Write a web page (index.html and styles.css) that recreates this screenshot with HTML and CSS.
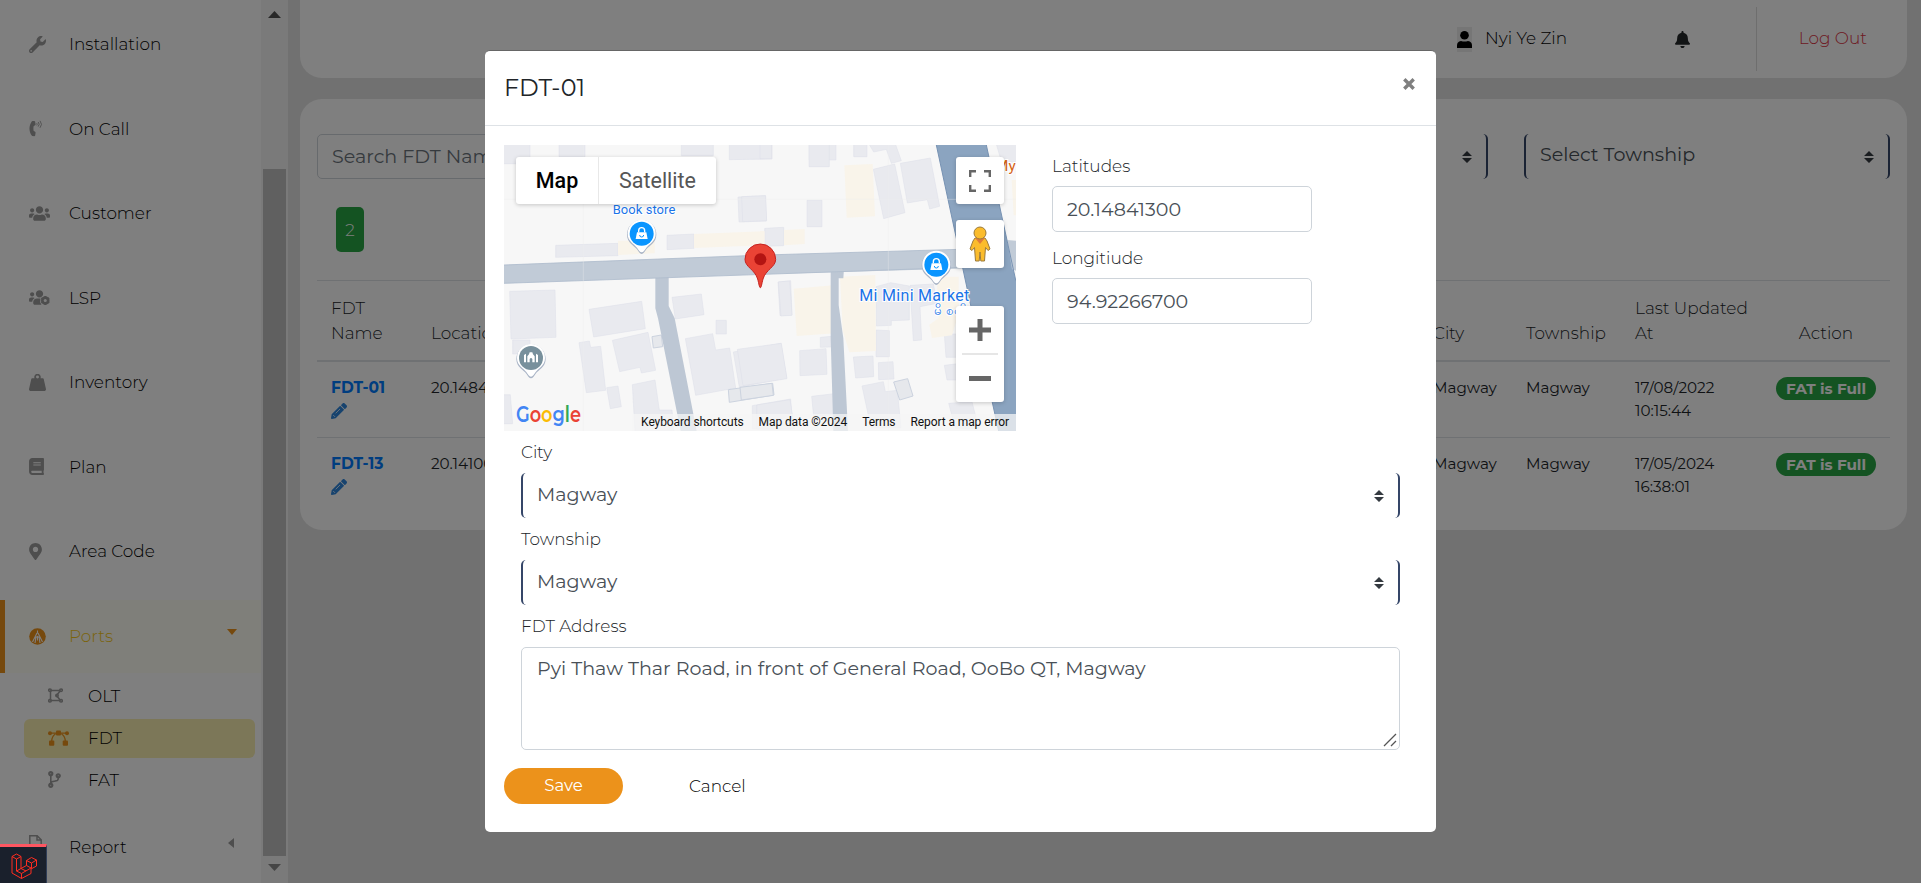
FILE: index.html
```html
<!DOCTYPE html>
<html lang="en">
<head>
<meta charset="utf-8">
<title>FDT</title>
<link rel="stylesheet" href="styles.css">
</head>
<body>
<svg class="defs" aria-hidden="true">
  <defs>
    <symbol id="pencil" viewBox="0 0 512 512"><path d="M497.9 142.1l-46.1 46.1c-4.7 4.7-12.3 4.7-17 0l-111-111c-4.7-4.7-4.7-12.3 0-17l46.1-46.1c18.7-18.7 49.1-18.7 67.9 0l60.1 60.1c18.8 18.7 18.8 49.1 0 67.9zM284.2 99.8L21.6 362.4.4 483.9c-2.9 16.4 11.4 30.6 27.8 27.8l121.5-21.3 262.6-262.6c4.7-4.7 4.7-12.3 0-17l-111-111c-4.8-4.7-12.4-4.7-17.1 0z"/><path d="M150 330L290 190M70 385l60 60" stroke="#fff" stroke-width="24" fill="none"/></symbol>
    <symbol id="sort" viewBox="0 0 10 12"><path d="M5 0l5 5H0zM5 12L0 7h10z"/></symbol>
    <symbol id="bag-pin" viewBox="-46 -46 92 114">
      <path d="M0 60C-5 60-9 53-14 46C-22 35-44 26-44 2A44 44 0 0 1 44 2C44 26 22 35 14 46C9 53 5 60 0 60z" fill="#a9b4c6"/>
      <path d="M0 55C-5 55-9 48-14 41C-22 30-42 22-42-1A42 42 0 0 1 42-1C42 22 22 30 14 41C9 48 5 55 0 55z" fill="#fff"/>
      <circle cy="-1" r="36" fill="#0a95ff"/>
      <path d="M-14-5h28l4 20h-36z" fill="#fff"/><path d="M-9-5v-5a9 9 0 0 1 18 0v5" fill="none" stroke="#fff" stroke-width="4"/><path d="M-6 3a6 6 0 0 0 12 0" fill="none" stroke="#0a95ff" stroke-width="3"/>
    </symbol>
  </defs>
</svg>
<div class="page">
  <aside class="sidebar">
    <nav class="menu">
      <a class="item"><span class="ico"><svg width="17" height="17" viewBox="0 0 512 512"><path d="M507.73 109.1c-2.24-9.03-13.54-12.09-20.12-5.51l-74.36 74.36-67.88-11.31-11.31-67.88 74.36-74.36c6.62-6.62 3.43-17.9-5.66-20.16-47.38-11.74-99.55.91-136.58 37.93-39.64 39.64-50.55 97.1-34.05 147.2L18.74 402.76c-24.99 24.99-24.99 65.51 0 90.5 24.99 24.99 65.51 24.99 90.5 0l213.21-213.21c50.12 16.71 107.47 5.68 147.37-34.22 37.07-37.07 49.7-89.32 37.91-136.73zM64 472c-13.25 0-24-10.75-24-24 0-13.26 10.75-24 24-24s24 10.74 24 24c0 13.25-10.75 24-24 24z"/></svg></span>Installation</a>
      <a class="item"><span class="ico"><svg width="14" height="17" viewBox="0 0 14 17"><path d="M3.4 1.1L5.3.9c.4 0 .7.2.8.5l.5 3c0 .4-.1.7-.4.9L4.700 6.100c-.4 1.700-.4 3.200 0 4.900l1.500.800c.3.200.4.500.4.900l-.5 3c-.1.300-.4.500-.8.500l-1.900-.2c-.3 0-.5-.2-.7-.4C-.3 11.400-.3 5.700 2.700 1.500c.2-.2.400-.4.700-.4z"/><path d="M7.800 3.200q.7 1.100 0 2.200M9.200 2q2 2.300 0 4.600M11 .800q3 3.600 0 7" fill="none" stroke="#9c9c9c" stroke-width=".9"/></svg></span>On Call</a>
      <a class="item"><span class="ico"><svg width="21" height="17" viewBox="0 0 640 512"><path d="M96 224c35.3 0 64-28.7 64-64s-28.7-64-64-64-64 28.7-64 64 28.7 64 64 64zm448 0c35.3 0 64-28.7 64-64s-28.7-64-64-64-64 28.7-64 64 28.7 64 64 64zm32 32h-64c-17.6 0-33.5 7.100-45.100 18.600 40.300 22.100 68.900 62 75.100 109.400h66c17.700 0 32-14.300 32-32v-32c0-35.300-28.700-64-64-64zm-256 0c61.900 0 112-50.100 112-112S381.900 32 320 32 208 82.100 208 144s50.100 112 112 112zm76.800 32h-8.300c-20.800 10-43.900 16-68.500 16s-47.600-6-68.500-16h-8.300C179.600 288 128 339.600 128 403.200V432c0 26.500 21.500 48 48 48h288c26.500 0 48-21.500 48-48v-28.800c0-63.600-51.600-115.200-115.200-115.200zm-223.700-13.400C161.500 263.100 145.600 256 128 256H64c-35.300 0-64 28.700-64 64v32c0 17.700 14.300 32 32 32h65.900c6.300-47.400 34.900-87.300 75.200-109.400z"/></svg></span>Customer</a>
      <a class="item"><span class="ico"><svg width="21" height="17" viewBox="0 0 640 512"><path d="M96 224c35.3 0 64-28.7 64-64s-28.7-64-64-64-64 28.7-64 64 28.7 64 64 64zm224 32c61.900 0 112-50.100 112-112S381.900 32 320 32 208 82.100 208 144s50.100 112 112 112zm-146.900 18.600C161.500 263.100 145.600 256 128 256H64c-35.300 0-64 28.700-64 64v32c0 17.700 14.300 32 32 32h65.900c6.300-47.400 34.900-87.300 75.200-109.400zM128 403c0-64 52-115 115-115h90c20 0 20 20 14 40l-8 70 40 82H176c-26 0-48-21-48-48z"/><circle cx="496" cy="346" r="88" fill="none" stroke="#9c9c9c" stroke-width="84"/><path d="M496 208v276M376 277l240 138M376 415l240-138" stroke="#9c9c9c" stroke-width="58"/><circle cx="496" cy="346" r="46" fill="#fff"/></svg></span>LSP</a>
      <a class="item"><span class="ico"><svg width="17" height="17" viewBox="0 0 512 512"><path fill-rule="evenodd" d="M165 128a98 98 0 1 1 182 0h71c12 0 22 8 25 19l68 302c7 32-18 63-50 63H51c-32 0-57-31-50-63L69 147c3-11 13-19 25-19zm91 10a45 45 0 1 0 0-90 45 45 0 0 0 0 90z"/></svg></span>Inventory</a>
      <a class="item"><span class="ico"><svg width="15" height="17" viewBox="0 0 448 512"><path d="M448 360V24c0-13.300-10.700-24-24-24H96C43 0 0 43 0 96v320c0 53 43 96 96 96h328c13.300 0 24-10.700 24-24v-16c0-7.500-3.500-14.300-8.900-18.700-4.200-15.400-4.200-59.300 0-74.700 5.400-4.300 8.900-11.100 8.900-18.600zM128 134c0-3.300 2.700-6 6-6h212c3.300 0 6 2.700 6 6v20c0 3.300-2.700 6-6 6H134c-3.300 0-6-2.700-6-6v-20zm0 64c0-3.300 2.700-6 6-6h212c3.300 0 6 2.700 6 6v20c0 3.300-2.700 6-6 6H134c-3.300 0-6-2.700-6-6v-20zm253.400 250H96c-17.700 0-32-14.300-32-32 0-17.600 14.400-32 32-32h285.400c-1.900 17.100-1.900 46.900 0 64z"/></svg></span>Plan</a>
      <a class="item"><span class="ico"><svg width="13" height="17" viewBox="0 0 384 512"><path d="M172.268 501.670C26.970 291.031 0 269.413 0 192 0 85.961 85.961 0 192 0s192 85.961 192 192c0 77.413-26.970 99.031-172.268 309.670-9.535 13.774-29.930 13.773-39.464 0zM192 272c44.183 0 80-35.817 80-80s-35.817-80-80-80-80 35.817-80 80 35.817 80 80 80z"/></svg></span>Area Code</a>
      <a class="item active"><span class="ico"><svg width="17" height="17" viewBox="0 0 17 17"><circle cx="8.500" cy="8.500" r="8.300"/><path d="M8.500 2.500v3M8 5L3.500 14M9 5l4.500 9M7 9l-1 6M10 9l1 6M6 10l2.500-1.500L11 10" fill="none" stroke="#fff" stroke-width="1.100"/><path d="M8.500 8.500v4" stroke="#fff"/></svg></span>Ports<svg class="caret" width="10" height="6" viewBox="0 0 10 6"><path d="M0 0h10L5 6z"/></svg></a>
      <div class="sub">
        <a class="subitem"><span class="ico"><svg width="15" height="15" viewBox="0 0 15 15" class="line"><path d="M2.500 2.500v10M2.500 2.500h10M2.500 12.500h10M12.500 2.500l-4 5 4 5"/><circle cx="2" cy="2.200" r="1.300"/><circle cx="13" cy="2.200" r="1.300"/><circle cx="2" cy="12.800" r="1.300"/><circle cx="13" cy="12.800" r="1.300"/><circle cx="9" cy="7.500" r="1.200"/></svg></span>OLT</a>
        <a class="subitem current"><span class="ico"><svg width="21" height="16" viewBox="0 0 21 16"><circle cx="2" cy="3.200" r="2"/><circle cx="19" cy="3.200" r="2"/><rect x="8" y=".500" width="5" height="5" rx="1"/><rect x="1" y="10.500" width="5.300" height="5.300" rx="1"/><rect x="14.700" y="10.500" width="5.300" height="5.300" rx="1"/><path d="M2 3.200h17M7.500 4Q4 6 3.700 11M13.500 4Q17 6 17.300 11" fill="none" stroke="#ec921b" stroke-width="1.300"/></svg></span>FDT</a>
        <a class="subitem"><span class="ico"><svg width="13" height="17" viewBox="0 0 384 512"><path d="M384 144c0-44.200-35.800-80-80-80s-80 35.800-80 80c0 36.400 24.300 67.100 57.500 76.800-.6 16.100-4.200 28.500-11 36.900-15.400 19.200-49.300 22.400-85.200 25.700-28.200 2.600-57.400 5.400-81.300 16.900v-144c32.500-10.200 56-40.500 56-76.300 0-44.200-35.800-80-80-80S0 35.800 0 80c0 35.800 23.500 66.100 56 76.300v199.300C23.500 365.900 0 396.200 0 432c0 44.200 35.800 80 80 80s80-35.800 80-80c0-34-21.200-63.100-51.200-74.600 3.100-5.200 7.800-9.800 14.900-13.400 16.200-8.200 40.400-10.400 66.100-12.800 42.200-3.900 90-8.400 118.200-43.400 14-17.400 21.100-39.800 21.600-67.900 31.600-10.800 54.400-40.700 54.400-75.900zM80 64c8.800 0 16 7.200 16 16s-7.200 16-16 16-16-7.200-16-16 7.200-16 16-16zm0 384c-8.800 0-16-7.200-16-16s7.200-16 16-16 16 7.200 16 16-7.200 16-16 16zm224-320c8.800 0 16 7.200 16 16s-7.200 16-16 16-16-7.200-16-16 7.200-16 16-16z"/></svg></span>FAT</a>
      </div>
      <a class="item"><span class="ico up"><svg width="13" height="17" viewBox="0 0 13 17" class="line"><path d="M.8.800h7.400l4 4v11.400H.8zM8 .800V5h4.200"/></svg></span>Report<svg class="caret side" width="6" height="10" viewBox="0 0 6 10"><path d="M6 0v10L0 5z"/></svg></a>
    </nav>
    <div class="scroll">
      <svg width="13" height="7" viewBox="0 0 13 7"><path d="M0 7L6.500 0 13 7z" fill="#505050"/></svg>
      <div class="thumb"></div>
      <svg width="13" height="7" viewBox="0 0 13 7"><path d="M0 0l6.500 7L13 0z" fill="#8b8b8b"/></svg>
    </div>
  </aside>
  <main class="main">
    <header class="topbar">
      <span class="user"><svg width="15" height="25" viewBox="0 0 15 25"><path d="M0 0h15v25H0z" fill="#ececec"/><circle cx="7.500" cy="8.200" r="4.300"/><path d="M0 21v-2.500Q0 14.500 4 14q3.500 1.200 7 0 4 .5 4 4.500V21z"/></svg><span>Nyi Ye Zin</span></span>
      <svg class="bell" width="15" height="17" viewBox="0 0 448 512"><path d="M224 512c35.320 0 63.970-28.650 63.970-64H160.030c0 35.350 28.650 64 63.970 64zm215.390-149.710c-19.320-20.760-55.470-51.990-55.470-154.290 0-77.700-54.480-139.900-127.940-155.160V32c0-17.670-14.320-32-31.980-32s-31.980 14.330-31.980 32v20.840C118.560 68.100 64.080 130.300 64.080 208c0 102.300-36.150 133.530-55.470 154.290-6 6.450-8.660 14.160-8.610 21.710.11 16.400 12.980 32 32.100 32h383.800c19.120 0 32-15.600 32.100-32 .05-7.550-2.610-15.270-8.610-21.710z"/></svg>
      <a class="logout">Log Out</a>
    </header>
    <section class="card">
      <div class="filters">
        <div class="search">Search FDT Name</div>
        <div class="select"><span>Select City</span><svg width="10" height="12"><use href="#sort"/></svg></div>
        <div class="select"><span>Select Township</span><svg width="10" height="12"><use href="#sort"/></svg></div>
      </div>
      <div class="count">2</div>
      <div class="table">
        <div class="row head"><div>FDT Name</div><div>Location</div><div>City</div><div>Township</div><div>Last Updated At</div><div class="act">Action</div></div>
        <div class="row"><div class="name">FDT-01<svg width="16" height="16"><use href="#pencil"/></svg></div><div>20.14841300</div><div>Magway</div><div>Magway</div><div>17/08/2022 10:15:44</div><div class="act"><span class="full">FAT is Full</span></div></div>
        <div class="row"><div class="name">FDT-13<svg width="16" height="16"><use href="#pencil"/></svg></div><div>20.14100000</div><div>Magway</div><div>Magway</div><div>17/05/2024 16:38:01</div><div class="act"><span class="full">FAT is Full</span></div></div>
      </div>
    </section>
  </main>
</div>
<div class="backdrop">
  <div class="modal">
    <div class="mhead"><h5>FDT-01</h5><svg class="close" width="12" height="12" viewBox="0 0 12 12"><path d="M1.300 1.300l9.400 9.400M10.700 1.300l-9.400 9.400" stroke="#7f7f7f" stroke-width="3.400"/></svg></div>
    <div class="mbody">
      <div class="geo">
        <div class="map">
          <svg class="canvas" width="512" height="286" viewBox="0 0 1536 858">
            <rect width="1536" height="858" fill="#f7f7f7"/>
            <g transform="translate(-12 -15)">
              <g fill="#e9eaef" stroke="#dcdee8" stroke-width="1.500">
                <path d="M0 0h90v71H0zM177 0h78v50h-78zM544 0h96v47h-96zM688 0h128v57l-128 2zM928 0h80v60h-80zM714 171l82-4 3 76-82 3zM167 316l187-6v37l-187 5zM501 286l81-4v43l-81 4zM29 454l136-4 3 142-135 5zM38 600h52v42H38zM267 508l158-24 11 82-155 25zM237 608l31-5 4 19 30-3 15 132-58 7zM337 601l107-24 23 114-43 8-4-17-61 13zM320 743l34-5 10 62-33 6zM397 734l68-14 13 90 38 0 6 65H405zM516 472l88-10 8 62-86 13zM648 541h31v41h-31zM556 596l82-15 9 49 42-6 18 120-120 22zM700 636l143-26 17 103-142 29zM0 764h31l7 87H0zM757 797l115-20 6 90H757zM834 426l38-4 4 103-36 2z"/>
                <path d="M456 590l28-5 4 35-28 4zM685 749l133-19 4 35-134 22z" fill="#e6e8ec" stroke="#ccd3df" stroke-width="3"/>
              </g>
              <path d="M354 302h110v38l-110 5zM582 282l210-8v42l-210 8z" fill="#f9f4ea"/>
            </g>
            <g transform="translate(768 -15)">
              <g fill="#e9eaef" stroke="#dcdee8" stroke-width="1.500">
                <path d="M147 0h61v80h-61zM281 0h40v50h-40zM320 0h82l22 62-30 8-15-42-38 8zM0 0h35v56H0zM-55 170l72-3 3 75-72 3zM141 181h45v79h-45zM14 265l57-3v55l-57 2zM340 88l64-16 31 146-64 18zM421 70l90-16 28 145-30 8-7-28-60 10zM55 426l34-3 7 103-33 2zM119 632l79-6 3 77-81 4zM181 592l58-5v33l-58 2zM-68 628l132-18 17 106-132 21zM155 769l68-8 8 62-70 8zM-10 795l100-16 14 88H-10zM280 651l59-3 2 62-54 4zM355 668l44-3 3 52-46 2zM306 738l64-13 6 30 36-4 11 112h-90zM348 570l40 2v78h-40zM348 440l44-12 56 10v102l-54 2v14l-45 2zM450 436l70-4 12 58-52 10 5 100-25 2zM553 582h60v70h-55zM553 676l50-6v50h-42zM566 790l70-5 20 80h-70zM705 0h70v66h-50z"/>
                <path d="M401 726l42-10 16 52-40 12zM-60 742l96-12 4 36-96 14z" fill="#e6e8ec" stroke="#ccd3df" stroke-width="3"/>
              </g>
              <path d="M253 76l85-4 7 157-85 4zM72 270l62-3v45l-62 4zM0 274h14v42H0zM101 446l118-10 8 144-117 8zM240 410l106-5 2 228-80 4-20-66zM530 410h66v110l-20 66-60 8-8-40 28-20zM755 120h20v106h-14z" fill="#f9f4ea"/>
            </g>
            <path d="M454 395h40v88L512 520 578 858H530L462 520 454 490zM980 370h40l-2 30h-14v80l14 100 14 278h-44L980 580z" fill="#bdc7d4"/>
            <path d="M0 360L780 330 1536 308V366L780 388 0 415z" fill="#c1cbd7"/>
            <path d="M0 360L780 330 1400 312M0 415L780 388 1400 366" fill="none" stroke="#aebccd" stroke-width="2.500"/>
            <path d="M1297 0h150l89 410v448h-52L1400 480z" fill="#8ba4c0"/>
            <path d="M1510 285l26 2v90l-12-4z" fill="#c1cbd7"/>
            <path d="M1297 0L1400 480 1484 858M1447 0l89 410" fill="none" stroke="#7792b3" stroke-width="3"/>
            <path d="M238 0v858M1153 0v858M0 163h1536" stroke="#efefef" stroke-width="2" opacity=".5"/>
            <g class="poi">
              <text x="420" y="208" class="small" textLength="188">Book store</text>
              <text x="1231" y="469" class="big" textLength="330">Mi Mini Market</text>
              <text x="1291" y="510" class="mm">မိ စတိ</text>
              <text x="1473" y="77" class="my">My</text>
            </g>
            <use href="#bag-pin" x="367" y="221" width="92" height="114"/>
            <use href="#bag-pin" x="1251" y="314" width="92" height="114"/>
            <g transform="translate(81 640)">
              <path d="M0 60C-5 60-9 53-14 46C-22 35-44 26-44 2A44 44 0 0 1 44 2C44 26 22 35 14 46C9 53 5 60 0 60z" fill="#a9b4c6"/>
              <path d="M0 55C-5 55-9 48-14 41C-22 30-42 22-42-1A42 42 0 0 1 42-1C42 22 22 30 14 41C9 48 5 55 0 55z" fill="#fff"/>
              <circle cy="-1" r="36" fill="#78909c"/>
              <path d="M-21-10v22h6v-26zM-11-6v18h7V2q4-6 8 0v10h7V-6L6-12l-2-6h-8l-2 6zM15-14v26h6v-22z" fill="#fff"/>
            </g>
            <path d="M769 428c-3 0-4-11-8-26-8-28-38-36-38-59a46 46 0 0 1 92 0c0 23-30 31-38 59-4 15-5 26-8 26z" fill="#ea4335" stroke="#c5221f" stroke-width="3"/>
            <circle cx="769" cy="343" r="18" fill="#b31412"/>
            <rect x="384" y="807" width="1152" height="51" fill="#f5f5f5" opacity=".75"/>
          </svg>
          <div class="overlay">
            <div class="types"><span class="on">Map</span><span>Satellite</span></div>
            <div class="ctl fs"><svg width="22" height="22" viewBox="0 0 22 22"><path d="M1.200 7V1.200H7M15 1.200h5.800V7M20.800 15v5.800H15M7 20.800H1.200V15" fill="none" stroke="#666" stroke-width="2.400"/></svg></div>
            <div class="ctl peg"><svg width="22" height="36" viewBox="0 0 22 36"><path d="M6 12h10l2 3 3 8-2 1.500-2.500-3L15.500 35h-3.700L11 26l-.8 9H6.500l-1-13.500-2.500 3L1 23l3-8z" fill="#fbbc2c" stroke="#9a7a3c"/><path d="M6 12h10l-5 6z" fill="#e07b39"/><circle cx="11" cy="7" r="6" fill="#fbbc2c" stroke="#9a7a3c"/></svg></div>
            <div class="ctl zoomer"><svg width="48" height="96" viewBox="0 0 48 96"><path d="M13 24h22M24 13v22M13 72.500h22" stroke="#666" stroke-width="5"/><path d="M6 48h36" stroke="#e6e6e6" stroke-width="2"/></svg></div>
            <svg class="google" width="66" height="26" viewBox="0 0 66 26"><text y="20" textLength="65" lengthAdjust="spacingAndGlyphs"><tspan fill="#4285f4">G</tspan><tspan fill="#ea4335">o</tspan><tspan fill="#fbbc04">o</tspan><tspan fill="#4285f4">g</tspan><tspan fill="#34a853">l</tspan><tspan fill="#ea4335">e</tspan></text></svg>
            <div class="legal"><span>Keyboard shortcuts</span><span>Map data ©2024</span><span>Terms</span><span>Report a map error</span></div>
          </div>
        </div>
        <div class="coords">
          <label>Latitudes</label><div class="input">20.14841300</div>
          <label>Longitiude</label><div class="input">94.92266700</div>
        </div>
      </div>
      <div class="form">
        <label>City</label>
        <div class="select"><span>Magway</span><svg width="10" height="12"><use href="#sort"/></svg></div>
        <label>Township</label>
        <div class="select"><span>Magway</span><svg width="10" height="12"><use href="#sort"/></svg></div>
        <label>FDT Address</label>
        <div class="area"><span>Pyi Thaw Thar Road, in front of General Road, OoBo QT, Magway</span><svg width="14" height="14" viewBox="0 0 14 14"><path d="M1 13L13 1M8 13l5-5" stroke="#555" stroke-width="1.300"/></svg></div>
      </div>
      <div class="buttons"><a class="save">Save</a><a class="cancel">Cancel</a></div>
    </div>
  </div>
</div>
<div class="debug"><svg width="26" height="26" viewBox="0 0 26 26"><path d="M1 3.500L5.500 1 10 3.500v12l5.500-3V7.500L20.500 4.500 25.500 7v6L20 16v4.500L10.500 25.500 1 20zM1 3.500L5.500 6 10 3.500M5.500 6v12L10.500 20.500 20 15M5.500 18l4.500-2.500 5 2.500M10.500 20.500v5M15.500 7.500l5 2.500 5-3M20.500 10v5.500M15.500 12.500l4.500 2.500"/></svg></div>
</body>
</html>
```
FILE: styles.css
```css
* { box-sizing: border-box; }
body { margin: 0; width: 100vw; height: 100vh; overflow: hidden; background: #e3e3e3; font-family: "Montserrat", "Inter", sans-serif; font-size: 16.900px; font-weight: 300; color: #212529; }
svg { display: block; flex: none; }
.defs { position: absolute; width: 0; height: 0; }
.page { display: flex; height: 883px; }

.sidebar { display: flex; width: 288px; height: 883px; background: #fff; }
.menu { width: 261px; height: 883px; padding-top: 8px; overflow: hidden; color: #000; }
.item { display: flex; align-items: center; height: 73px; margin-bottom: 11.500px; padding: 0 0 1px 29px; }
.ico { width: 40px; fill: #9c9c9c; }
.ico.up { margin-top: -7px; }
.line { fill: none; stroke: #9c9c9c; stroke-width: 1.500; }
.caret { margin: -8px 24px 0 auto; fill: #ec921b; }
.caret.side { margin-right: 27px; fill: #9c9c9c; }
.active { margin-bottom: 0; padding: 0 0 0 24px; border-left: 5px solid #ec921b; color: #f6c816; background: #fffef4; }
.active .ico, .current .ico { fill: #ec921b; }
.sub { display: flex; flex-direction: column; gap: 3px; padding: 4px 6px 12px 24px; }
.subitem { display: flex; align-items: center; height: 39px; padding: 0 0 1px 24px; border-radius: 6px; }
.sub + .item { margin-top: -1px; }
.current { background: #f9eeb0; }
.scroll { display: flex; flex-direction: column; align-items: center; width: 27px; padding: 11px 0 12px; background: #f4f4f4; }
.thumb { width: 23px; height: 687px; margin: 151px 0 auto; background: #c1c1c1; }

.main { display: flex; flex-direction: column; gap: 21px; width: 1607px; margin-left: 12px; }
.topbar { display: flex; align-items: center; height: 78px; padding-right: 40px; background: #fff; border-radius: 0 0 22px 22px; }
.user { display: flex; align-items: center; gap: 13px; margin-left: 1157px; width: 218px; color: #000; }
.user span, .logout { padding-bottom: 2px; }
.bell { fill: #25282b; }
.logout { display: flex; align-items: center; justify-content: flex-end; height: 64px; width: 111px; margin-left: auto; border-left: 1px solid #ddd; color: #dc3545; }
.card { height: 431px; padding: 35px 17px 0; background: #fff; border-radius: 22px; }
.filters { display: grid; grid-template-columns: 750px 385px 366px; gap: 36px; }
.search, .input { display: flex; align-items: center; height: 45px; padding: 0 14px; border: 1px solid #ced4da; border-radius: 5px; font-size: 19.100px; font-weight: 400; color: #495057; }
.search { color: #6c757d; }
.select { display: flex; align-items: center; justify-content: space-between; height: 45px; padding: 0 14px 2px 14px; border: solid #354668; border-width: 0 2px; border-radius: 5px; font-size: 19.100px; font-weight: 400; color: #495057; }
.select span { padding-bottom: 1px; }
.filters .select span { padding-bottom: 3px; }
.select svg { fill: #343a40; margin-top: 3px; }
.count { display: flex; align-items: center; justify-content: center; width: 28px; height: 45px; margin: 28px 0 28px 19px; border-radius: 5px; background: #28a745; color: #fff; }
.row { display: grid; grid-template-columns: 100px 1002px 93px 109px 141px 128px; height: 76px; padding-top: 14px; border-top: 1px solid #dee2e6; font-size: 15.200px; font-weight: 400; line-height: 23px; }
.row > div { padding: 0 14px; }
.head { height: 80px; padding: 0 0 14px; align-items: end; font-size: 16.900px; font-weight: 300; line-height: 25px; }
.head + .row { height: 77px; border-top-width: 2px; }
.row > .name { font-weight: 700; font-size: 15.500px; color: #007bff; fill: #2f86dd; }
.name svg { margin-top: 4px; }
.act { text-align: center; white-space: nowrap; }
.full { display: block; height: 23px; margin-top: 1px; border-radius: 12px; background: #28a745; color: #fff; font-weight: 700; }

.backdrop { position: absolute; inset: 0; display: flex; padding: 50px 0 0 485px; background: rgba(0,0,0,.5); }
.modal { width: 951px; height: 782px; background: #fff; border: 1px solid #666; border-width: 1px 0 0; border-radius: 5px; }
.mhead { display: flex; justify-content: space-between; height: 75px; padding: 21px 21px 0 19px; border-bottom: 1px solid #dee2e6; }
h5 { margin: 0; font-size: 23.800px; font-weight: 400; line-height: 32px; }
.close { margin-top: 6px; }
.mbody { padding: 19px 20px 0 19px; }
.geo { display: flex; height: 286px; }
.map { position: relative; width: 512px; height: 286px; overflow: hidden; font-family: Roboto, sans-serif; font-weight: 400; }
.poi { fill: #1a73e8; stroke: #fff; stroke-width: 6px; paint-order: stroke; }
.small, .big { text-anchor: middle; }
.small { font-size: 39px; }
.big { font-size: 48px; }
.mm { font-size: 40px; }
.my { font-size: 46px; fill: #d56314; }
.overlay { position: absolute; inset: 0; }
.types, .ctl, .google, .legal { position: absolute; background: #fff; }
.types { left: 12px; top: 12px; display: flex; height: 47px; line-height: 48px; border-radius: 3px; box-shadow: 0 1px 4px rgba(0,0,0,.2); font-size: 21.500px; color: #565656; }
.types span { width: 117px; text-align: center; }
.types .on { width: 83px; border-right: 1px solid #e8e8e8; font-weight: 500; color: #000; }
.ctl { left: 452px; width: 48px; display: flex; align-items: center; justify-content: center; border-radius: 3px; box-shadow: 0 1px 4px rgba(0,0,0,.2); }
.fs { top: 12px; height: 47px; }
.peg { top: 75px; height: 48px; }
.zoomer { top: 161px; height: 96px; }
.google { left: 12px; top: 257px; background: none; font: 600 22px "Montserrat", sans-serif; }
.legal { right: 7px; bottom: 0; display: flex; gap: 15px; background: none; font-size: 12px; letter-spacing: -.09px; line-height: 17px; color: #111; white-space: nowrap; }
.coords { width: 260px; margin-left: 36px; padding-top: 8px; }
label { display: block; height: 26px; line-height: 26px; }
.coords label { margin-bottom: 7px; }
.coords .input { height: 46px; margin-bottom: 13px; }
.form { padding: 8px 16px 0 17px; }
.form label { margin-bottom: 8px; }
.form .select { margin-bottom: 8px; }
.area { display: flex; justify-content: space-between; height: 103px; padding: 8px 2px 2px 15px; border: 1px solid #ced4da; border-radius: 5px; font-size: 19.100px; font-weight: 400; line-height: 26px; color: #495057; }
.area svg { align-self: flex-end; }
.buttons { display: flex; align-items: center; gap: 66px; margin-top: 18px; }
.save { width: 119px; height: 36px; line-height: 34px; text-align: center; border-radius: 18px; background: #ec921b; color: #fff; font-weight: 400; font-size: 16.600px; }
.cancel { color: #000; line-height: 34px; margin-top: -1px; }
.debug { position: absolute; left: 0; bottom: 0; display: flex; width: 47px; height: 39px; padding: 6px 0 0 11px; background: #1a202c; border-top: 3px solid #ff5661; border-right: 1px solid #2f3d57; }
.debug path { fill: none; stroke: #ff2d20; stroke-width: 1; }
```
